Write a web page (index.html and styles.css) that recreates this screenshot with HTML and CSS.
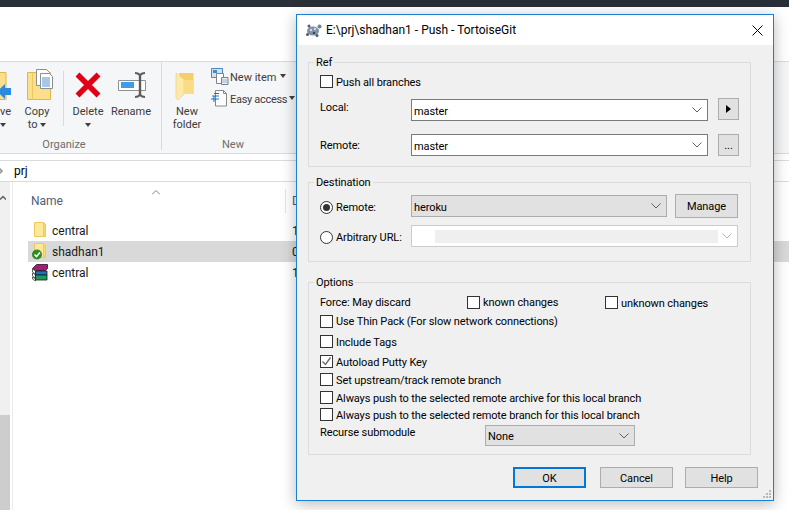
FILE: index.html
```html
<!DOCTYPE html>
<html lang="en">
<head>
  <meta charset="UTF-8">
  <title>E:\prj\shadhan1 - Push - TortoiseGit</title>
  <link rel="stylesheet" href="styles.css">
</head>
<body>
  <div class="explorer">
    <div class="topbar"></div>
    <div class="tabs"></div>
    <div class="ribbon">
      <div class="rgroup">
        <div class="rtools">
          <div class="tool tool-move">
            <svg class="ticon" width="14" height="34" viewBox="0 0 14 34">
              <path d="M-1 4.500h7v27h-7z" fill="#fbdf8b" stroke="#e2b747"/>
              <path d="M11 20H5v-4l-8 7.500L5 31v-4h6z" fill="#2b8ae0"/>
            </svg>
            <span class="tlabel">ve</span>
            <span class="tlabel"><i class="caret"></i></span>
          </div>
          <div class="tool tool-copy">
            <svg class="ticon" width="46" height="34" viewBox="0 0 46 34">
              <path d="M13.500 4.500h23v27h-23z" fill="#fbdf8b" stroke="#e2b747"/>
              <path d="M18.500 4.500v27" stroke="#eec95f"/>
              <path d="M22.500 1.500h10l3 3v13h-13z" fill="#fff" stroke="#8a8f96"/>
              <path d="M26.500 5.500h9l3 3v12h-12z" fill="#fff" stroke="#8a8f96"/>
              <path d="M28 10h8M28 12h8M28 14h8M28 16h8M28 18h8" stroke="#4d8fd6"/>
            </svg>
            <span class="tlabel">Copy</span>
            <span class="tlabel">to <i class="caret"></i></span>
          </div>
          <div class="rsep"></div>
          <div class="tool tool-delete">
            <svg class="ticon" width="44" height="34" viewBox="0 0 44 34">
              <path d="M11.500 6.500l21 21M32.500 6.500l-21 21" stroke="#e00016" stroke-width="5.500" fill="none"/>
            </svg>
            <span class="tlabel">Delete</span>
            <span class="tlabel"><i class="caret"></i></span>
          </div>
          <div class="tool tool-rename">
            <svg class="ticon" width="42" height="34" viewBox="0 0 42 34">
              <path d="M8.500 12.500h27v10h-27z" fill="#fff" stroke="#8c9196"/>
              <path d="M11 14h13v6H11z" fill="#3d9be9"/>
              <path d="M25 5c3 0 4 1 5 2 1-1 2-2 5-2M25 29c3 0 4-1 5-2 1 1 2 2 5 2" fill="none" stroke="#5c5c5c" stroke-width="2"/>
              <path d="M30 6v22" stroke="#5c5c5c" stroke-width="2.400"/>
            </svg>
            <span class="tlabel">Rename</span>
          </div>
        </div>
        <div class="rname rname-org">Organize</div>
      </div>
      <div class="rgroup rgroup-new">
        <div class="rtools">
          <div class="tool tool-folder">
            <svg class="ticon" width="44" height="34" viewBox="0 0 44 34">
              <path d="M14 5h14.500v21H18z" fill="#f5cf6c"/>
              <path d="M11 5l8 6.500V26l-6 6-2-2z" fill="#fde9a8" stroke="#eccd7a" stroke-width=".6"/>
              <path d="M19 12h9.500v14H19z" fill="#fbdc86"/>
            </svg>
            <span class="tlabel">New</span>
            <span class="tlabel">folder</span>
          </div>
          <div class="tool-col">
            <div class="tool-small">
              <svg width="20" height="22" viewBox="0 0 20 22">
                <path d="M2.500 3.500h11v9h-11z" fill="#cfe3f5" stroke="#4d86b8"/>
                <path d="M4 5h4v3H4z" fill="#4d86b8"/>
                <path d="M7.500 8.500h7v10h-7z" fill="#fff" stroke="#7d8288"/>
                <path d="M12.500 12.500h6.500v7h-6.500z" fill="#e6edf6" stroke="#7d8288"/>
                <path d="M13 15h6M13 17h6" stroke="#a3b8d4"/>
              </svg>
              <span>New item</span>
              <i class="caret"></i>
            </div>
            <div class="tool-small tool-tight">
              <svg width="20" height="22" viewBox="0 0 20 22">
                <path d="M6.500 3.500h8l3 3v12.500h-11z" fill="#fff" stroke="#83878c"/>
                <path d="M14.500 3.500v3h3" fill="none" stroke="#83878c"/>
                <path d="M5 6.500h5M3 9h7M2 12h8M5 9v6" stroke="#1f6fc0" fill="none"/>
              </svg>
              <span>Easy access</span>
              <i class="caret"></i>
            </div>
          </div>
        </div>
        <div class="rname rname-new">New</div>
      </div>
    </div>
    <div class="ribbon-gap"></div>
    <div class="address">
      <svg width="6" height="8" viewBox="0 0 6 8"><path d="M0 0l4 4-4 4" fill="none" stroke="#8a8a8a" stroke-width="1.500"/></svg>
      <span>prj</span>
    </div>
    <div class="main">
      <div class="vscroll">
        <svg width="6" height="5" viewBox="0 0 6 5"><path d="M0 4.500l3-3 3 3" fill="none" stroke="#606060" stroke-width="1.500"/></svg>
        <div class="vthumb"></div>
      </div>
      <div class="files">
        <div class="fhead">
          <div class="fhead-name">
            Name
            <svg class="sort" width="8" height="5" viewBox="0 0 8 5"><path d="M0 4.500l4-4 4 4" fill="none" stroke="#808080"/></svg>
          </div>
          <div class="fhead-date">D</div>
        </div>
        <div class="frow-file">
          <svg width="18" height="21" viewBox="0 0 18 21">
            <path d="M3.500 2.500h9v5h2v9h-11z" fill="#fde99a" stroke="#eec85c"/>
            <path d="M12.500 2.500l2 2v12h-2z" fill="#f7d97a" stroke="#eec85c"/>
          </svg>
          <span class="fname">central</span>
          <span class="fdate">1</span>
        </div>
        <div class="frow-file is-selected">
          <svg width="18" height="21" viewBox="0 0 18 21">
            <path d="M3.500 2.500h9v5h2v9h-11z" fill="#fde99a" stroke="#eec85c"/>
            <path d="M12.500 2.500l2 2v12h-2z" fill="#f7d97a" stroke="#eec85c"/>
            <circle cx="6" cy="13.500" r="5" fill="#2e8b20"/>
            <path d="M3.500 13.500l2 2 3.500-4" fill="none" stroke="#fff" stroke-width="1.600"/>
          </svg>
          <span class="fname">shadhan1</span>
          <span class="fdate">0</span>
        </div>
        <div class="frow-file">
          <svg width="18" height="21" viewBox="0 0 18 21">
            <path d="M1.500 6.500l4-4h11v4l-2 2h-10z" fill="#a41c74" stroke="#2a1020" stroke-width=".8"/>
            <path d="M1.500 7l3 2v3l-3-2zM1.500 11l3 2v3l-3-2zM1.500 15l3 2v2l-3-2z" fill="#fff" stroke="#222" stroke-width=".7"/>
            <path d="M4.500 9h11.500v4H4.500z" fill="#1f73b8" stroke="#10202a" stroke-width=".8"/>
            <path d="M4.500 13H16v5H4.500z" fill="#1c9a58" stroke="#10201a" stroke-width=".8"/>
          </svg>
          <span class="fname">central</span>
          <span class="fdate">1</span>
        </div>
      </div>
    </div>
  </div>

  <div class="dialog">
    <div class="dtitle">
      <svg class="turtle" width="17" height="15" viewBox="0 0 17 15">
        <ellipse cx="8" cy="8" rx="6" ry="4.500" fill="#7f90a8"/>
        <circle cx="14.500" cy="3.500" r="2" fill="#6f7f96"/>
        <circle cx="2.500" cy="11.500" r="1.500" fill="#4f5b6c"/>
        <circle cx="12" cy="12.500" r="1.500" fill="#4f5b6c"/>
        <circle cx="4" cy="3" r="1.500" fill="#4f5b6c"/>
        <circle cx="6" cy="7" r="1.200" fill="#d5dce6"/>
        <circle cx="10" cy="6" r="1.200" fill="#d5dce6"/>
        <circle cx="9" cy="10" r="1.200" fill="#39434f"/>
      </svg>
      <span class="dtitle-text">E:\prj\shadhan1 - Push - TortoiseGit</span>
      <svg class="dclose" width="11" height="11" viewBox="0 0 11 11"><path d="M.5.500l10 10M10.500.500l-10 10" stroke="#000" fill="none"/></svg>
    </div>

    <div class="dbody">
      <fieldset class="group">
        <legend>Ref</legend>
        <div class="gbody gbody-ref">
          <div class="opt low"><span class="check"></span><span>Push all branches</span></div>
          <div class="row row-local">
            <span class="rlabel rlabel-top">Local:</span>
            <div class="combo combo-ref"><span>master</span><svg width="10" height="6" viewBox="0 0 10 6"><path d="M.5.500l4.500 4.500 4.500-4.500" fill="none" stroke="#606060"/></svg></div>
            <button class="btn btn-tiny btn-up"><svg width="5" height="8" viewBox="0 0 5 8"><path d="M0 0l5 4-5 4z" fill="#000"/></svg></button>
          </div>
          <div class="row row-remote">
            <span class="rlabel">Remote:</span>
            <div class="combo combo-ref"><span>master</span><svg width="10" height="6" viewBox="0 0 10 6"><path d="M.5.500l4.500 4.500 4.500-4.500" fill="none" stroke="#606060"/></svg></div>
            <button class="btn btn-tiny">...</button>
          </div>
        </div>
      </fieldset>

      <fieldset class="group group-dest">
        <legend>Destination</legend>
        <div class="gbody gbody-dest">
          <div class="row">
            <div class="opt rlabel"><span class="radio is-on"></span><span>Remote:</span></div>
            <div class="combo combo-grey combo-heroku"><span>heroku</span><svg width="10" height="6" viewBox="0 0 10 6"><path d="M.5.500l4.500 4.500 4.500-4.500" fill="none" stroke="#606060"/></svg></div>
            <button class="btn btn-manage">Manage</button>
          </div>
          <div class="row row-url">
            <div class="opt rlabel"><span class="radio"></span><span>Arbitrary URL:</span></div>
            <div class="combo combo-off"><div class="combo-fill"></div><svg width="10" height="6" viewBox="0 0 10 6"><path d="M.5.500l4.500 4.500 4.500-4.500" fill="none" stroke="#b0b0b0"/></svg></div>
          </div>
        </div>
      </fieldset>

      <fieldset class="group group-options">
        <legend>Options</legend>
        <div class="gbody gbody-options">
          <div class="opt">
            <span class="force">Force: May discard</span>
            <div class="opt known"><span class="check"></span><span>known changes</span></div>
            <div class="opt low"><span class="check"></span><span>unknown changes</span></div>
          </div>
          <div class="opt gap-6"><span class="check"></span><span>Use Thin Pack (For slow network connections)</span></div>
          <div class="opt low gap-7"><span class="check"></span><span>Include Tags</span></div>
          <div class="opt low gap-7"><span class="check"><svg width="11" height="11" viewBox="0 0 11 11"><path d="M1.500 5.500l3 3 5-7" fill="none" stroke="#6a6a6a" stroke-width="1.400"/></svg></span><span>Autoload Putty Key</span></div>
          <div class="opt low gap-5"><span class="check"></span><span>Set upstream/track remote branch</span></div>
          <div class="opt low gap-5"><span class="check"></span><span>Always push to the selected remote archive for this local branch</span></div>
          <div class="opt low gap-4"><span class="check"></span><span>Always push to the selected remote branch for this local branch</span></div>
          <div class="row row-recurse">
            <span class="recurse">Recurse submodule</span>
            <div class="combo combo-grey combo-none"><span>None</span><svg width="10" height="6" viewBox="0 0 10 6"><path d="M.5.500l4.500 4.500 4.500-4.500" fill="none" stroke="#606060"/></svg></div>
          </div>
        </div>
      </fieldset>

      <div class="dfoot">
        <button class="btn btn-foot btn-ok">OK</button>
        <button class="btn btn-foot btn-cancel">Cancel</button>
        <button class="btn btn-foot">Help</button>
      </div>
    </div>

    <svg class="grip" width="10" height="9" viewBox="0 0 10 9">
      <path d="M7 0h2v2H7zM4 3h2v2H4zM7 3h2v2H7zM1 6h2v2H1zM4 6h2v2H4zM7 6h2v2H7z" fill="#b8b8b8"/>
    </svg>
  </div>
</body>
</html>
```
FILE: styles.css
```css
* { box-sizing: border-box; }
html, body { margin: 0; padding: 0; }
body {
  width: 789px;
  height: 510px;
  overflow: hidden;
  position: relative;
  background: #fff;
  font-family: "Roboto", "Open Sans", sans-serif;
  font-size: 12px;
  color: #000;
}

/* explorer window behind the dialog */
.explorer { display: flex; flex-direction: column; height: 510px; }
.topbar { height: 7px; background: #2b3038; }
.tabs { height: 54px; background: #fff; }

.ribbon {
  display: flex;
  height: 93px;
  background: #f5f6f7;
  border-top: 1px solid #dadbdc;
  border-bottom: 1px solid #dadbdc;
  color: #3c3c3c;
  font-size: 11px;
}
.rgroup { display: flex; flex-direction: column; width: 162px; border-right: 1px solid #dadbdc; margin-bottom: 3px; }
.rgroup-new { width: 142px; border-right: none; }
.rtools { display: flex; height: 75px; }
.rname { height: 13px; line-height: 15px; text-align: center; color: #6d6d6d; }
.rname-org { width: 128px; }
.rname-new { width: 142px; }

.tool { display: flex; flex-direction: column; align-items: center; }
.ticon { margin-top: 6px; margin-bottom: 3px; flex: none; }
.tlabel { height: 13px; line-height: 13px; white-space: nowrap; }
.tool-move { width: 14px; overflow: hidden; align-items: flex-start; }
.tool-copy { width: 46px; }
.tool-delete { width: 44px; }
.tool-rename { width: 42px; }
.tool-folder { width: 44px; margin-left: 3px; }
.rsep { width: 1px; height: 55px; margin: 9px 2px 0 3px; background: #dadbdc; }

.caret {
  display: inline-block;
  width: 0;
  height: 0;
  border-left: 3.5px solid transparent;
  border-right: 3.5px solid transparent;
  border-top: 4px solid #404040;
  vertical-align: middle;
}
.tool-col { display: flex; flex-direction: column; padding-top: 3px; }
.tool-small { display: flex; align-items: center; height: 22px; white-space: nowrap; }
.tool-small span { margin: 3px 4px 0 1px; }
.tool-tight span { margin-right: 2px; letter-spacing: -.3px; }

.ribbon-gap { height: 6px; }
.address {
  display: flex;
  align-items: center;
  height: 22px;
  gap: 10px;
  border-top: 1px solid #dadbdc;
  border-bottom: 1px solid #dadbdc;
  color: #000;
}
.address svg { margin-left: -2px; }

.main { display: flex; flex: 1; }
.vscroll {
  display: flex;
  flex-direction: column;
  width: 13px;
  padding-top: 13px;
  border-right: 1px solid #ececec;
  background: linear-gradient(to right, #f0f0f0 10px, #fff 10px);
}
.vthumb { width: 10px; margin-top: auto; height: 95px; background: #cdcdcd; }

.files { flex: 1; padding-left: 15px; }
.fhead { display: flex; height: 38px; padding-top: 7px; color: #4c607a; }
.fhead-name {
  position: relative;
  width: 258px;
  height: 24px;
  padding-left: 3px;
  line-height: 24px;
  border-right: 1px solid #e5e5e5;
}
.fhead-date { padding-left: 6px; line-height: 24px; }
.sort { position: absolute; left: 124px; top: 1px; }
.frow-file { display: flex; align-items: center; height: 21px; padding-left: 3px; color: #1a1a1a; }
.fname { width: 240px; margin-left: 3px; }
.is-selected { background: #d9d9d9; }

/* push dialog */
.dialog {
  position: absolute;
  left: 296px;
  top: 14px;
  width: 478px;
  height: 487px;
  background: #f0f0f0;
  border: 1px solid #1a7fd0;
  box-shadow: 0 3px 14px rgba(0, 0, 0, .28);
}
.dtitle { display: flex; align-items: center; height: 30px; padding-left: 8px; background: #fff; }
.turtle { flex: none; }
.dtitle-text { margin-left: 4px; }
.dclose { margin-left: auto; margin-right: 10px; }
.dbody { padding: 9px 0 0 11px; font-size: 11px; letter-spacing: -.1px; }

.group {
  width: 443px;
  margin: 0;
  padding: 0;
  border: 1px solid #dcdcdc;
}
.group legend { height: 16px; line-height: 18px; margin-left: 5px; padding: 0 2px; }
.group-dest, .group-options { margin-top: 7px; }
.group-options { margin-top: 12px; }
.gbody { padding: 0 11px; }
.gbody-ref { height: 96px; padding-top: 5px; }
.gbody-dest { height: 71px; padding-top: 5px; }
.gbody-options { height: 164px; padding-top: 6px; }

.opt { display: flex; align-items: center; height: 13px; white-space: nowrap; }
.low > span:last-child { margin-top: 2px; }
.check, .radio { flex: none; width: 13px; height: 13px; margin-right: 3px; border: 1px solid #333; background: #fff; }
.radio { border-radius: 50%; padding: 2px; }
.is-on::after { content: ""; display: block; width: 7px; height: 7px; border-radius: 50%; background: #333; }
.check svg { display: block; }

.row { display: flex; align-items: center; height: 22px; }
.row-local { margin-top: 11px; }
.row-remote { margin-top: 13px; }
.row-url { margin-top: 8px; }
.rlabel { flex: none; width: 91px; }
.rlabel-top { align-self: flex-start; line-height: 18px; }
.gbody-dest .rlabel { margin-top: 2px; }

.combo {
  display: flex;
  align-items: center;
  justify-content: space-between;
  height: 22px;
  padding: 0 5px 0 2px;
  background: #fff;
  border: 1px solid #7a7a7a;
}
.combo span { margin-top: 2px; }
.combo-ref { width: 297px; }
.combo-grey { background: #e1e1e1; border-color: #adadad; }
.combo-heroku { width: 256px; }
.combo-off { width: 327px; border-color: #ccc; padding-left: 23px; }
.combo-fill { width: 283px; height: 13px; background: #efefef; }
.combo-none { width: 150px; height: 21px; }

.btn {
  margin: 0;
  padding: 0;
  background: #e1e1e1;
  border: 1px solid #adadad;
  font: inherit;
  letter-spacing: inherit;
  color: #000;
}
.btn-tiny { width: 21px; height: 22px; margin-left: 10px; flex: none; }
.btn-up { margin-bottom: 2px; }
.btn-manage { flex: none; width: 63px; height: 24px; margin-left: 8px; }

.force { width: 147px; }
.known { width: 138px; }
.gap-4 { margin-top: 4px; }
.gap-5 { margin-top: 5px; }
.gap-6 { margin-top: 6px; }
.gap-7 { margin-top: 7px; }
.row-recurse { margin-top: 4px; height: 21px; }
.recurse { width: 165px; align-self: flex-start; line-height: 16px; }

.dfoot { display: flex; justify-content: flex-end; gap: 12px; margin-top: 12px; padding-right: 15px; }
.btn-foot { width: 73px; height: 21px; padding-top: 1px; }
.btn-ok { border: 2px solid #0078d7; }
.btn-cancel { margin-left: 2px; }
.grip { position: absolute; right: 1px; bottom: 1px; }
```
